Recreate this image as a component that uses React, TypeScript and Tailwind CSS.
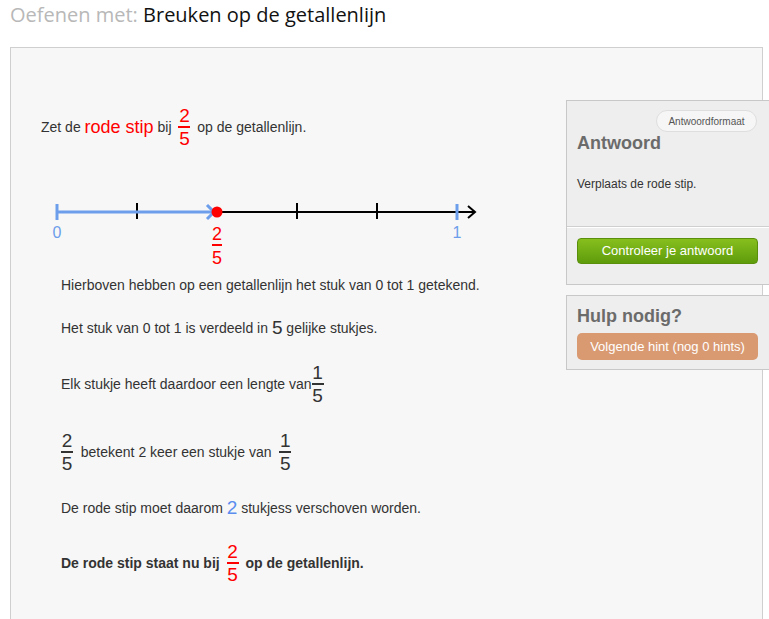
import React from "react";

const sans = { fontFamily: '"Liberation Sans", Arial, sans-serif' };

function Frac({ top, bottom, color = "text-[#333]", className = "" }: { top: string; bottom: string; color?: string; className?: string }) {
  const line = color === "text-[#f00]" ? "bg-[#f00]" : "bg-[#333]";
  return (
    <span className={`inline-flex flex-col items-center text-[19px] font-normal leading-[19px] ${color} ${className}`}>
      <span>{top}</span>
      <span className={`my-[1px] h-[2px] w-[12px] ${line}`} />
      <span>{bottom}</span>
    </span>
  );
}

function NumberLine() {
  const blue = "#6d9eeb";
  return (
    <svg width="460" height="75" className="mt-[48px] block" style={sans}>
      <line x1="176" y1="17" x2="433" y2="17" stroke="#000" strokeWidth="2" />
      {[96, 256, 336].map((x) => (
        <line key={x} x1={x} y1="8" x2={x} y2="24" stroke="#000" strokeWidth="2" />
      ))}
      <polyline points="427,11 434,17 427,23" fill="none" stroke="#000" strokeWidth="2" />
      <line x1="16" y1="17" x2="172" y2="17" stroke={blue} strokeWidth="3" />
      <line x1="16" y1="9" x2="16" y2="25" stroke={blue} strokeWidth="3" />
      <line x1="416" y1="9" x2="416" y2="25" stroke={blue} strokeWidth="3" />
      <polyline points="166,10 173,17 166,24" fill="none" stroke={blue} strokeWidth="3" />
      <circle cx="176" cy="17" r="5.5" fill="#f00" />
      <text x="16" y="43" fontSize="16" fill={blue} textAnchor="middle">0</text>
      <text x="416" y="43" fontSize="16" fill={blue} textAnchor="middle">1</text>
      <text x="176" y="45" fontSize="18" fill="#f00" textAnchor="middle">2</text>
      <line x1="171" y1="50" x2="181" y2="50" stroke="#f00" strokeWidth="2" />
      <text x="176" y="69" fontSize="18" fill="#f00" textAnchor="middle">5</text>
    </svg>
  );
}

function Fold() {
  return (
    <span className="absolute right-[-1px] top-[-10px] h-0 w-0 border-l-[8px] border-t-[10px] border-l-[#c4c4c4] border-t-transparent" />
  );
}

export default function App() {
  return (
    <div className="min-h-screen w-full overflow-hidden bg-white" style={sans}>
      <div className="h-[47px] pl-[10px] text-[20px] leading-[30px]" style={{ fontFamily: '"Open Sans", sans-serif' }}>
        <span className="text-[#b8b8b8]">Oefenen met: </span>
        <span className="text-[#111]">Breuken op de getallenlijn</span>
      </div>

      <div className="ml-[10px] flex h-[600px] w-[753px] border border-[#cfcfcf] bg-[#f7f7f7]">
        <div className="w-[556px] pl-[30px] pt-[59px] text-[14px] text-[#333]">
          <div className="flex h-[40px] items-center">
            <span>Zet de&nbsp;</span>
            <span className="text-[18px] text-[#f00]">rode stip</span>
            <span>&nbsp;bij&nbsp;</span>
            <Frac top="2" bottom="5" color="text-[#f00]" className="mx-[3px]" />
            <span>&nbsp;op de getallenlijn.</span>
          </div>

          <NumberLine />

          <div className="pl-[20px]">
            <div className="mt-[5px] flex h-[20px] items-center">
              Hierboven hebben op een getallenlijn het stuk van 0 tot 1 getekend.
            </div>
            <div className="mt-[23px] flex h-[20px] items-center">
              <span>Het stuk van 0 tot 1 is verdeeld in&nbsp;</span>
              <span className="text-[19px]">5</span>
              <span>&nbsp;gelijke stukjes.</span>
            </div>
            <div className="mt-[22px] flex h-[48px] items-center">
              <span>Elk stukje heeft daardoor een lengte van</span>
              <Frac top="1" bottom="5" />
            </div>
            <div className="mt-[20px] flex h-[48px] items-center">
              <Frac top="2" bottom="5" />
              <span>&nbsp;&nbsp;betekent 2 keer een stukje van&nbsp;&nbsp;</span>
              <Frac top="1" bottom="5" />
            </div>
            <div className="mt-[22px] flex h-[20px] items-center">
              <span>De rode stip moet daarom&nbsp;</span>
              <span className="text-[19px] text-[#5b8def]">2</span>
              <span>&nbsp;stukjess verschoven worden.</span>
            </div>
            <div className="mt-[21px] flex h-[48px] items-center font-bold">
              <span>De rode stip staat nu bij&nbsp;</span>
              <Frac top="2" bottom="5" color="text-[#f00]" className="mx-[3px]" />
              <span>&nbsp;op de getallenlijn.</span>
            </div>
          </div>
        </div>

        <div className="-mr-[20px] w-[216px] shrink-0 pt-[52px]">
          <div className="relative border border-[#c8c8c8] bg-[#eeeeee]">
            <Fold />
            <div className="h-[126px] border-b border-[#cfcfcf] pl-[10px] pr-[24px] pt-[9px]">
              <div className="flex justify-end">
                <span className="flex h-[22px] w-[101px] items-center justify-center rounded-full border border-[#dedede] bg-[#f6f6f6] text-[10px] text-[#555]">
                  Antwoordformaat
                </span>
              </div>
              <div className="mt-0 text-[18px] font-bold leading-[22px] text-[#6b6b6b]">Antwoord</div>
              <div className="mt-[21px] text-[12px] text-[#333]">Verplaats de rode stip.</div>
            </div>
            <div className="border-t border-white pb-[20px] pl-[10px] pt-[10px]">
              <button className="flex h-[26px] w-[181px] items-center justify-center rounded-[4px] border border-[#5a8f0c] bg-gradient-to-b from-[#86bf1d] to-[#5f9c0b] text-[13px] text-white">
                Controleer je antwoord
              </button>
            </div>
          </div>

          <div className="relative mt-[10px] border border-[#c8c8c8] bg-[#eeeeee] pb-[9px] pl-[10px] pt-[8px]">
            <Fold />
            <div className="text-[18px] font-bold leading-[24px] text-[#6b6b6b]">Hulp nodig?</div>
            <button className="mt-[5px] flex h-[27px] w-[181px] items-center justify-center rounded-[5px] bg-[#d99a72] text-[13px] text-white">
              Volgende hint (nog 0 hints)
            </button>
          </div>
        </div>
      </div>
    </div>
  );
}
